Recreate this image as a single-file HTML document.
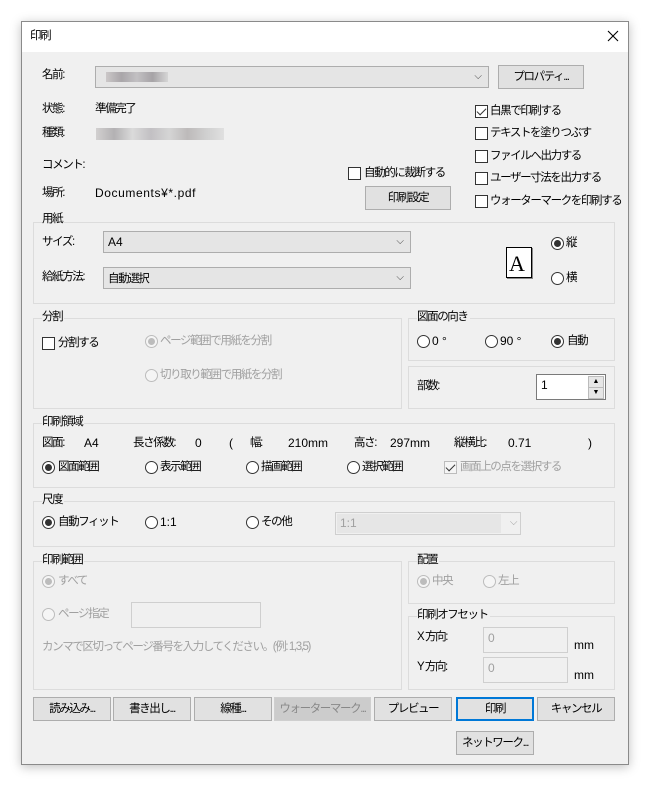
<!DOCTYPE html>
<html><head><meta charset="utf-8"><style>
body{margin:0;width:649px;height:785px;background:#fff;position:relative;overflow:hidden;font-family:"Liberation Sans","Noto Sans CJK JP",sans-serif;font-size:12px;color:#000}
.win{position:absolute;left:21px;top:21px;width:606px;height:742px;border:1px solid #8a8a8a;background:#f0f0f0;box-shadow:0 2px 10px rgba(0,0,0,.25)}
.tb{position:absolute;left:0;top:0;width:606px;height:30px;background:#fff}
.t,.btn,.gl{font-size:11.5px;letter-spacing:-1.4px}
.L{font-size:12px!important;letter-spacing:0!important}
.t{position:absolute;line-height:16px;white-space:nowrap}
.g{color:#a0a0a0}
.gb{position:absolute;border:1px solid #dcdcdc}
.gl{position:absolute;background:#f0f0f0;line-height:16px;padding-right:2px;white-space:nowrap}
.cb{position:absolute;width:11px;height:11px;border:1px solid #333;background:#fff}
.rd{position:absolute;width:11px;height:11px;border:1px solid #333;border-radius:50%;background:#fff}
.rd.on::after{content:"";position:absolute;left:2px;top:2px;width:7px;height:7px;border-radius:50%;background:#333}
.rd.dis{border-color:#bcbcbc;background:#f5f5f5}
.rd.dis.on::after{background:#bcbcbc}
.btn{position:absolute;border:1px solid #adadad;background:#e1e1e1;text-align:center;line-height:22px;height:22px;white-space:nowrap}
.cmb{position:absolute;border:1px solid #adadad;background:#e5e5e5;height:20px;line-height:20px}
.cmb .ar{position:absolute;right:6px;top:0;font-size:10px;color:#444}
.tx{position:absolute;border:1px solid #cfcfcf;background:#f0f0f0}
.chk::after{content:"";position:absolute;left:3px;top:0px;width:4px;height:8px;border:solid #333;border-width:0 1.5px 1.5px 0;transform:rotate(45deg)}
</style></head><body>
<div class="win">
<div class="tb"></div>
<div class="t" style="left:8px;top:6px">印刷</div>
<svg style="position:absolute;left:585px;top:8px" width="12" height="12"><path d="M1 1L11 11M11 1L1 11" stroke="#000" stroke-width="1.1"/></svg>
</div>
<div class="t" style="left:42px;top:67px">名前:</div>
<div class="cmb" style="left:95px;top:66px;width:392px"><span style="position:absolute;left:10px;top:5px;width:62px;height:10px;background:linear-gradient(90deg,#cbc7c8,#a9a6a9,#c2c0c3,#a6a3a6,#d6d6d6)"></span><span class="ar">⌵</span></div>
<div class="btn" style="left:498px;top:65px;width:84px">プロパティ...</div>
<div class="t" style="left:42px;top:101px">状態:</div><div class="t" style="left:95px;top:101px">準備完了</div>
<div class="t" style="left:42px;top:125px">種類:</div>
<div style="position:absolute;left:96px;top:128px;width:128px;height:12px;background:linear-gradient(90deg,#d2d0d0,#b3b1b3,#dadada,#c2c0c3,#d5d5d5,#bdbaba,#cfcfcf,#e0e0e0)"></div>
<div class="t" style="left:42px;top:157px">コメント:</div>
<div class="t" style="left:42px;top:185px">場所:</div><div class="t L" style="left:95px;top:185px;letter-spacing:0.6px!important">Documents¥*.pdf</div>
<div class="cb" style="left:348px;top:167px"></div><div class="t" style="left:364px;top:165px">自動的に裁断する</div>
<div class="btn" style="left:365px;top:186px;width:84px">印刷設定</div>
<div class="cb chk" style="left:475px;top:105px"></div><div class="t" style="left:490px;top:103px">白黒で印刷する</div>
<div class="cb" style="left:475px;top:127px"></div><div class="t" style="left:490px;top:125px">テキストを塗りつぶす</div>
<div class="cb" style="left:475px;top:150px"></div><div class="t" style="left:490px;top:148px">ファイルへ出力する</div>
<div class="cb" style="left:475px;top:172px"></div><div class="t" style="left:490px;top:170px">ユーザー寸法を出力する</div>
<div class="cb" style="left:475px;top:195px"></div><div class="t" style="left:490px;top:193px">ウォーターマークを印刷する</div>

<div class="gb" style="left:33px;top:222px;width:580px;height:80px"></div><div class="gl" style="left:42px;top:211px">用紙</div>
<div class="t" style="left:42px;top:234px">サイズ:</div>
<div class="cmb" style="left:103px;top:231px;width:306px"><span class="L" style="margin-left:4px">A4</span><span class="ar">⌵</span></div>
<div class="t" style="left:42px;top:269px">給紙方法:</div>
<div class="cmb" style="left:103px;top:267px;width:306px"><span style="margin-left:4px;font-size:11.5px;letter-spacing:-1.4px">自動選択</span><span class="ar">⌵</span></div>
<div style="position:absolute;left:506px;top:247px;width:24px;height:29px;border:1px solid #000;background:#fff;box-shadow:1px 1px 0 #888"></div>
<div class="t L" style="left:509px;top:252px;font-family:'Liberation Serif',serif;font-size:22px!important;line-height:24px">A</div>
<div class="rd on" style="left:551px;top:237px"></div><div class="t" style="left:566px;top:235px">縦</div>
<div class="rd" style="left:551px;top:272px"></div><div class="t" style="left:566px;top:270px">横</div>

<div class="gb" style="left:33px;top:318px;width:367px;height:89px"></div><div class="gl" style="left:42px;top:309px">分割</div>
<div class="cb" style="left:42px;top:337px"></div><div class="t" style="left:58px;top:335px">分割する</div>
<div class="rd dis on" style="left:145px;top:335px"></div><div class="t g" style="left:160px;top:333px">ページ範囲で用紙を分割</div>
<div class="rd dis" style="left:145px;top:369px"></div><div class="t g" style="left:160px;top:367px">切り取り範囲で用紙を分割</div>

<div class="gb" style="left:408px;top:318px;width:205px;height:41px"></div><div class="gl" style="left:417px;top:309px">図面の向き</div>
<div class="rd" style="left:417px;top:335px"></div><div class="t L" style="left:432px;top:333px">0 °</div>
<div class="rd" style="left:485px;top:335px"></div><div class="t L" style="left:500px;top:333px">90 °</div>
<div class="rd on" style="left:551px;top:335px"></div><div class="t" style="left:567px;top:333px">自動</div>

<div class="gb" style="left:408px;top:366px;width:205px;height:41px"></div>
<div class="t" style="left:417px;top:378px">部数:</div>
<div style="position:absolute;left:536px;top:374px;width:68px;height:24px;border:1px solid #7a7a7a;background:#fff"><span style="position:absolute;left:4px;top:3px">1</span>
<div style="position:absolute;right:1px;top:1px;width:14px;height:10px;background:#e6e6e6;border:1px solid #bbb;font-size:7px;line-height:10px;text-align:center">▲</div>
<div style="position:absolute;right:1px;top:12px;width:14px;height:10px;background:#e6e6e6;border:1px solid #bbb;font-size:7px;line-height:10px;text-align:center">▼</div></div>

<div class="gb" style="left:33px;top:423px;width:580px;height:63px"></div><div class="gl" style="left:42px;top:414px">印刷領域</div>
<div class="t" style="left:42px;top:435px">図面:</div><div class="t L" style="left:84px;top:435px">A4</div>
<div class="t" style="left:133px;top:435px">長さ係数:</div><div class="t L" style="left:195px;top:435px">0</div>
<div class="t L" style="left:229px;top:435px">(</div><div class="t" style="left:250px;top:435px">幅:</div><div class="t L" style="left:288px;top:435px">210mm</div>
<div class="t" style="left:354px;top:435px">高さ:</div><div class="t L" style="left:390px;top:435px">297mm</div>
<div class="t" style="left:454px;top:435px">縦横比:</div><div class="t L" style="left:508px;top:435px">0.71</div><div class="t L" style="left:588px;top:435px">)</div>
<div class="rd on" style="left:42px;top:461px"></div><div class="t" style="left:58px;top:459px">図面範囲</div>
<div class="rd" style="left:145px;top:461px"></div><div class="t" style="left:160px;top:459px">表示範囲</div>
<div class="rd" style="left:246px;top:461px"></div><div class="t" style="left:261px;top:459px">描画範囲</div>
<div class="rd" style="left:347px;top:461px"></div><div class="t" style="left:362px;top:459px">選択範囲</div>
<div class="cb chk" style="left:444px;top:461px;border-color:#bcbcbc;background:#f5f5f5"></div><div class="t g" style="left:460px;top:459px">画面上の点を選択する</div>

<div class="gb" style="left:33px;top:501px;width:580px;height:44px"></div><div class="gl" style="left:42px;top:492px">尺度</div>
<div class="rd on" style="left:42px;top:516px"></div><div class="t" style="left:58px;top:514px">自動フィット</div>
<div class="rd" style="left:145px;top:516px"></div><div class="t L" style="left:160px;top:514px">1:1</div>
<div class="rd" style="left:246px;top:516px"></div><div class="t" style="left:261px;top:514px">その他</div>
<div style="position:absolute;left:335px;top:512px;width:184px;height:21px;border:1px solid #cfcfcf;background:#f0f0f0"><div style="position:absolute;left:1px;top:1px;width:164px;height:19px;background:#e6e6e6"></div><span class="t g L" style="left:4px;top:2px">1:1</span><span class="t g" style="right:4px;top:2px;font-size:10px">⌵</span></div>

<div class="gb" style="left:33px;top:561px;width:367px;height:127px"></div><div class="gl" style="left:42px;top:552px">印刷範囲</div>
<div class="rd dis on" style="left:42px;top:575px"></div><div class="t g" style="left:58px;top:573px">すべて</div>
<div class="rd dis" style="left:42px;top:608px"></div><div class="t g" style="left:58px;top:606px">ページ指定</div>
<div class="tx" style="left:131px;top:602px;width:128px;height:24px"></div>
<div class="t g" style="left:42px;top:639px">カンマで区切ってページ番号を入力してください。(例: 1,3,5)</div>

<div class="gb" style="left:408px;top:561px;width:205px;height:41px"></div><div class="gl" style="left:417px;top:552px">配置</div>
<div class="rd dis on" style="left:417px;top:575px"></div><div class="t g" style="left:432px;top:573px">中央</div>
<div class="rd dis" style="left:483px;top:575px"></div><div class="t g" style="left:498px;top:573px">左上</div>

<div class="gb" style="left:408px;top:616px;width:205px;height:72px"></div><div class="gl" style="left:417px;top:607px">印刷オフセット</div>
<div class="t" style="left:417px;top:629px">X 方向:</div><div class="tx" style="left:483px;top:627px;width:83px;height:24px"></div><div class="t g L" style="left:488px;top:630px">0</div><div class="t L" style="left:574px;top:637px">mm</div>
<div class="t" style="left:417px;top:659px">Y 方向:</div><div class="tx" style="left:483px;top:657px;width:83px;height:24px"></div><div class="t g L" style="left:488px;top:660px">0</div><div class="t L" style="left:574px;top:667px">mm</div>

<div class="btn" style="left:33px;top:697px;width:76px">読み込み...</div>
<div class="btn" style="left:113px;top:697px;width:76px">書き出し...</div>
<div class="btn" style="left:194px;top:697px;width:76px">線種...</div>
<div class="btn g" style="left:274px;top:697px;width:95px;border-color:#cfcfcf;background:#ccc;color:#888">ウォーターマーク...</div>
<div class="btn" style="left:374px;top:697px;width:76px">プレビュー</div>
<div class="btn" style="left:456px;top:697px;width:74px;border:2px solid #0078d7;line-height:20px;height:20px">印刷</div>
<div class="btn" style="left:537px;top:697px;width:76px">キャンセル</div>
<div class="btn" style="left:456px;top:731px;width:76px">ネットワーク...</div>
</body></html>
